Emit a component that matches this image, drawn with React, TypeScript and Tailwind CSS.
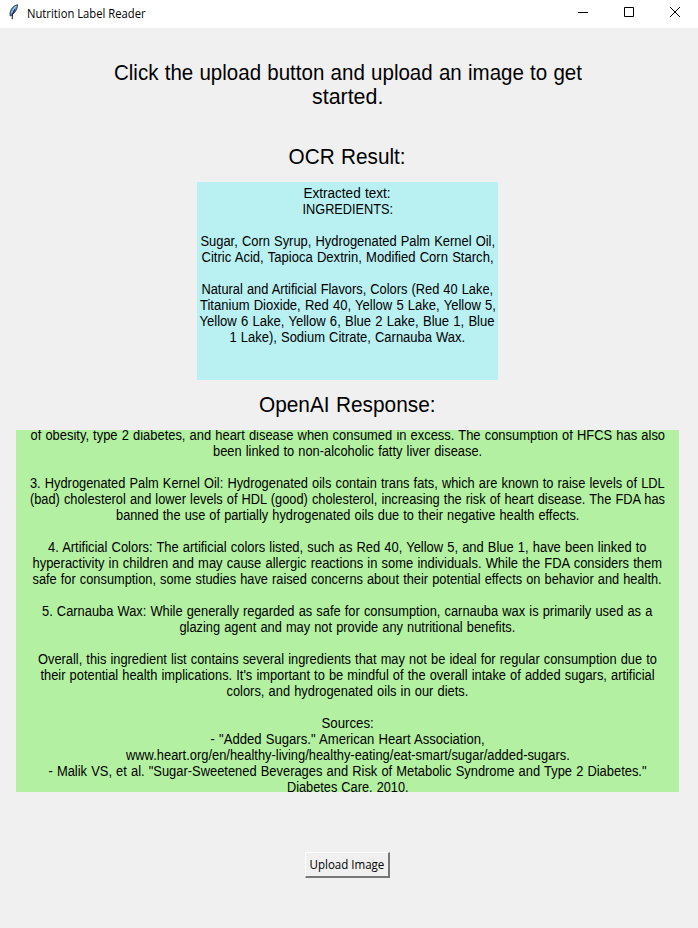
import { useLayoutEffect, useRef } from "react";

type LineData = [text: string, width?: number];

// One centred line whose glyphs are condensed so that it spans `width`.
function Line({ text, width }: { text: string; width?: number }) {
  const ref = useRef<HTMLSpanElement>(null);
  useLayoutEffect(() => {
    const el = ref.current;
    if (!el || !width) return;
    el.style.transform = `scaleX(${width / el.offsetWidth})`;
  }, [text, width]);
  return (
    <div className="mx-auto flex justify-center whitespace-pre" style={{ width }}>
      <span ref={ref} className="block shrink-0">{text || " "}</span>
    </div>
  );
}

function Lines({ lines }: { lines: LineData[] }) {
  return (
    <>
      {lines.map(([text, width], i) => (
        <Line key={i} text={text} width={width} />
      ))}
    </>
  );
}

const prompt: LineData[] = [
  ["Click the upload button and upload an image to get", 468],
  ["started.", 71],
];

const extracted: LineData[] = [
  ["Extracted text:", 87],
  ["INGREDIENTS:", 91],
  [""],
  ["Sugar, Corn Syrup, Hydrogenated Palm Kernel Oil,", 295],
  ["Citric Acid, Tapioca Dextrin, Modified Corn Starch,", 292],
  [""],
  ["Natural and Artificial Flavors, Colors (Red 40 Lake,", 292],
  ["Titanium Dioxide, Red 40, Yellow 5 Lake, Yellow 5,", 296],
  ["Yellow 6 Lake, Yellow 6, Blue 2 Lake, Blue 1, Blue", 295],
  ["1 Lake), Sodium Citrate, Carnauba Wax.", 236],
];

const response: LineData[] = [
  ["of obesity, type 2 diabetes, and heart disease when consumed in excess. The consumption of HFCS has also", 635],
  ["been linked to non-alcoholic fatty liver disease.", 269],
  [""],
  ["3. Hydrogenated Palm Kernel Oil: Hydrogenated oils contain trans fats, which are known to raise levels of LDL", 635],
  ["(bad) cholesterol and lower levels of HDL (good) cholesterol, increasing the risk of heart disease. The FDA has", 635],
  ["banned the use of partially hydrogenated oils due to their negative health effects.", 463],
  [""],
  ["4. Artificial Colors: The artificial colors listed, such as Red 40, Yellow 5, and Blue 1, have been linked to", 599],
  ["hyperactivity in children and may cause allergic reactions in some individuals. While the FDA considers them", 630],
  ["safe for consumption, some studies have raised concerns about their potential effects on behavior and health.", 629],
  [""],
  ["5. Carnauba Wax: While generally regarded as safe for consumption, carnauba wax is primarily used as a", 610],
  ["glazing agent and may not provide any nutritional benefits.", 336],
  [""],
  ["Overall, this ingredient list contains several ingredients that may not be ideal for regular consumption due to", 619],
  ["their potential health implications. It's important to be mindful of the overall intake of added sugars, artificial", 614],
  ["colors, and hydrogenated oils in our diets.", 242],
  [""],
  ["Sources:", 52],
  ['- "Added Sugars." American Heart Association,', 274],
  ["www.heart.org/en/healthy-living/healthy-eating/eat-smart/sugar/added-sugars.", 444],
  ['- Malik VS, et al. "Sugar-Sweetened Beverages and Risk of Metabolic Syndrome and Type 2 Diabetes."', 598],
  ["Diabetes Care. 2010.", 122],
];

function Feather() {
  return (
    <svg width="16" height="16" viewBox="0 0 16 16" fill="none">
      <path d="M11.6.7 8.4 1.8 5.4 5 4 9l.2 3 1.8-.9 3-3 2-3.8Z" fill="#5b91d3" stroke="#222" strokeWidth=".8" />
      <path d="M10.4 2 7.4 5.2 5.4 9" stroke="#8fc0f5" strokeWidth="1.3" />
      <path d="M8.8 5.4 6.4 10.4 6.2 15.2" stroke="#111" strokeWidth="1" />
    </svg>
  );
}

function TitleBar() {
  return (
    <header className="flex h-7 items-center bg-white pl-1.5 font-['Open_Sans','Segoe_UI',sans-serif] text-xs">
      <div className="-mt-1"><Feather /></div>
      <div className="ml-[5px] flex h-4 items-center">
        <Line text="Nutrition Label Reader" width={119} />
      </div>
      <div className="ml-auto flex pb-1">
        <svg className="mr-9" width="10" height="10" viewBox="0 0 10 10"><path d="M0 5.5h10" stroke="#000" /></svg>
        <svg className="mr-9" width="10" height="10" viewBox="0 0 10 10" fill="none"><path d="M.5.5h9v9h-9z" stroke="#000" /></svg>
        <svg className="mr-[18px]" width="10" height="10" viewBox="0 0 10 10"><path d="m0 0 10 10M10 0 0 10" stroke="#000" /></svg>
      </div>
    </header>
  );
}

export default function App() {
  return (
    <div className="flex h-[928px] w-[698px] flex-col overflow-hidden bg-[#f0f0f0] font-['Liberation_Sans',Arial,sans-serif] text-black">
      <TitleBar />
      <main className="flex flex-col items-center pr-[3px] text-[14px] leading-4 [word-spacing:0.6px]">
        <h1 className="mt-[33px] text-[22px] leading-6"><Lines lines={prompt} /></h1>
        <h2 className="mt-9 text-[22px] leading-6"><Line text="OCR Result:" width={117} /></h2>
        <section className="mt-[13px] h-[198px] w-[301px] bg-[#b9f0f2] pt-[3px]"><Lines lines={extracted} /></section>
        <h2 className="mt-[13px] text-[22px] leading-6"><Line text="OpenAI Response:" width={177} /></h2>
        <section className="mt-[13px] h-[362px] w-[663px] overflow-hidden bg-[#b3f0a1]">
          <div className="-mt-[3px]"><Lines lines={response} /></div>
        </section>
        <button className="mt-[60px] flex h-[26px] w-[85px] items-center justify-center border-t border-r-2 border-b-2 border-l border-t-white border-r-[#777] border-b-[#777] border-l-white pt-px font-['Open_Sans','Segoe_UI',sans-serif] text-xs">
          <Line text="Upload Image" width={75} />
        </button>
      </main>
    </div>
  );
}
